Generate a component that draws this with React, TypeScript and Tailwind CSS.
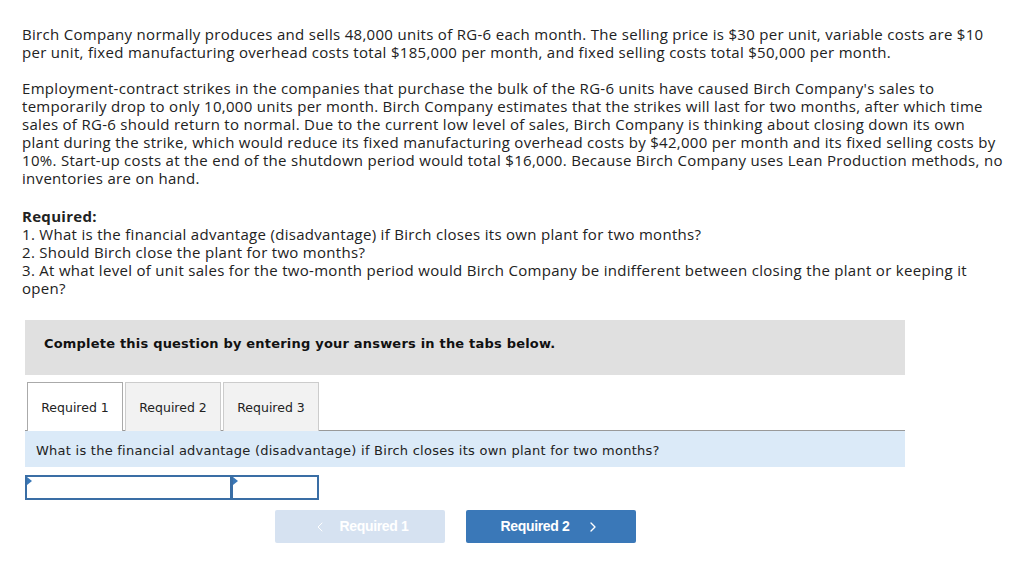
import { ChevronLeft, ChevronRight } from 'lucide-react';

const tabs = ['Required 1', 'Required 2', 'Required 3'];

function AnswerCell({ className }: { className: string }) {
  return (
    <div className={`relative h-[25px] border-2 border-[#3a6ea5] bg-white ${className}`}>
      <span className="absolute left-0 top-0 h-0 w-0 border-y-[4px] border-l-[5px] border-y-transparent border-l-[#3a78b8]"></span>
    </div>
  );
}

export default function App() {
  return (
    <div className="min-h-[563px] bg-white text-[#222] pl-[22px] pt-[25px]">
      <div className="font-['Open_Sans','Liberation_Sans',sans-serif] text-[15px] leading-[18px] tracking-[0.3px] text-[#222]">
        <p>
          Birch Company normally produces and sells 48,000 units of RG-6 each month. The selling price is $30 per unit, variable costs are $10
          <br />
          per unit, fixed manufacturing overhead costs total $185,000 per month, and fixed selling costs total $50,000 per month.
        </p>
        <p className="mt-[18px]">
          Employment-contract strikes in the companies that purchase the bulk of the RG-6 units have caused Birch Company's sales to
          <br />
          temporarily drop to only 10,000 units per month. Birch Company estimates that the strikes will last for two months, after which time
          <br />
          sales of RG-6 should return to normal. Due to the current low level of sales, Birch Company is thinking about closing down its own
          <br />
          plant during the strike, which would reduce its fixed manufacturing overhead costs by $42,000 per month and its fixed selling costs by
          <br />
          10%. Start-up costs at the end of the shutdown period would total $16,000. Because Birch Company uses Lean Production methods, no
          <br />
          inventories are on hand.
        </p>
        <p className="mt-[20px] font-bold">Required:</p>
        <p>1. What is the financial advantage (disadvantage) if Birch closes its own plant for two months?</p>
        <p>2. Should Birch close the plant for two months?</p>
        <p>
          3. At what level of unit sales for the two-month period would Birch Company be indifferent between closing the plant or keeping it
          <br />
          open?
        </p>
      </div>

      <div className="ml-[3px] mt-[23px] w-[880px] font-['DejaVu_Sans','Verdana',sans-serif] text-[13px]">
        <div className="flex h-[55px] items-center bg-[#e0e0e0] pb-[7px] pl-[19px] font-bold tracking-[0.2px] text-[#111]">
          Complete this question by entering your answers in the tabs below.
        </div>

        <div className="mt-[7px] flex items-end gap-[2px] border-b border-[#999] pl-[2px]">
          {tabs.map((tab, i) => (
            <div
              key={tab}
              className={`-mb-px flex h-[49px] w-[96px] items-center justify-center border border-b-0 pt-[2px] text-[12.5px] ${
                i === 0 ? 'border-[#aaa] bg-white' : 'border-[#ccc] bg-[#f2f2f2]'
              }`}
            >
              {tab}
            </div>
          ))}
        </div>

        <div className="flex h-[36px] items-center bg-[#dbeaf8] pl-[11px] pt-[3px] tracking-[0.25px] text-[#222]">
          What is the financial advantage (disadvantage) if Birch closes its own plant for two months?
        </div>

        <div className="mt-[8px] flex">
          <AnswerCell className="w-[207px]" />
          <AnswerCell className="w-[88px] -ml-[1px]" />
        </div>

        <div className="mt-[10px] flex gap-[21px] pl-[250px] font-['Liberation_Sans',Arial,sans-serif] text-[14px] font-bold tracking-tight text-white">
          <button className="flex h-[33px] w-[170px] items-center justify-center gap-[12px] rounded-[2px] bg-[#d6e2f1] text-white">
            <ChevronLeft className="h-4 w-4" strokeWidth={1.5} />
            Required 1
          </button>
          <button className="flex h-[33px] w-[170px] items-center justify-center gap-[16px] rounded-[2px] bg-[#3a78b8]">
            Required 2
            <ChevronRight className="h-4 w-4" strokeWidth={2} />
          </button>
        </div>
      </div>
    </div>
  );
}
